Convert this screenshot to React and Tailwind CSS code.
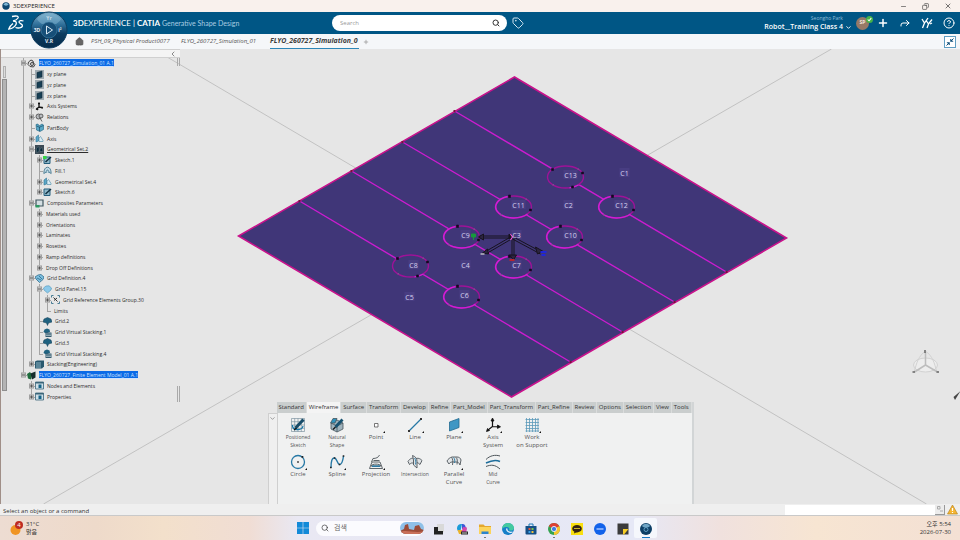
import {
  ChevronDown,
  ChevronLeft,
  CircleHelp,
  Copy,
  Forward,
  House,
  Minus,
  Plus,
  Search,
  Tag,
  X,
} from "lucide-react";

const treeRows = [
  { depth: 0, box: "-", icon: "part", label: "FLYO_260727_Simulation_01 A.1", selected: true },
  { depth: 1, icon: "plane", label: "xy plane" },
  { depth: 1, icon: "plane", label: "yz plane" },
  { depth: 1, icon: "plane", label: "zx plane" },
  { depth: 1, box: "+", icon: "axis", label: "Axis Systems" },
  { depth: 1, box: "+", icon: "relations", label: "Relations" },
  { depth: 1, icon: "body", label: "PartBody" },
  { depth: 1, box: "+", icon: "geoset", label: "Axis" },
  { depth: 1, box: "-", icon: "geosetActive", label: "Geometrical Set.2", underline: true },
  { depth: 2, box: "+", icon: "sketchGreen", label: "Sketch.1" },
  { depth: 2, icon: "fill", label: "Fill.1" },
  { depth: 2, box: "+", icon: "geoset", label: "Geometrical Set.4" },
  { depth: 2, box: "+", icon: "sketch", label: "Sketch.6" },
  { depth: 1, box: "-", icon: "composite", label: "Composites Parameters" },
  { depth: 2, box: "+", label: "Materials used" },
  { depth: 2, box: "+", label: "Orientations" },
  { depth: 2, box: "+", label: "Laminates" },
  { depth: 2, box: "+", label: "Rosettes" },
  { depth: 2, box: "+", label: "Ramp definitions" },
  { depth: 2, box: "+", label: "Drop Off Definitions" },
  { depth: 1, box: "-", icon: "gridDef", label: "Grid Definition.4" },
  { depth: 2, box: "-", icon: "gridPanel", label: "Grid Panel.15" },
  { depth: 3, box: "+", icon: "group", label: "Grid Reference Elements Group.30" },
  { depth: 3, label: "Limits" },
  { depth: 2, icon: "grid", label: "Grid.2" },
  { depth: 2, icon: "stacking", label: "Grid Virtual Stacking.1" },
  { depth: 2, icon: "grid", label: "Grid.3" },
  { depth: 2, icon: "stacking", label: "Grid Virtual Stacking.4" },
  { depth: 1, box: "+", icon: "engineering", label: "Stacking(Engineering)" },
  { depth: 0, box: "-", icon: "fem", label: "FLYO_260727_Finite Element Model_01 A.1", selected: true },
  { depth: 1, box: "+", icon: "nodes", label: "Nodes and Elements" },
  { depth: 1, box: "+", icon: "nodes", label: "Properties" },
];

const sections = [
  "Standard", "Wireframe", "Surface", "Transform", "Develop", "Refine", "Part_Model",
  "Part_Transform", "Part_Refine", "Review", "Options", "Selection", "View", "Tools",
];

const tools = [
  { icon: "sketch", lines: ["Positioned", "Sketch"], small: true },
  { icon: "natural", lines: ["Natural", "Shape"], small: true },
  { icon: "point", lines: ["Point"], more: true },
  { icon: "line", lines: ["Line"], more: true },
  { icon: "plane", lines: ["Plane"], more: true },
  { icon: "axis", lines: ["Axis", "System"], more: true },
  { icon: "support", lines: ["Work", "on Support"], more: true },
  { icon: "circle", lines: ["Circle"], more: true },
  { icon: "spline", lines: ["Spline"], more: true },
  { icon: "projection", lines: ["Projection"], more: true },
  { icon: "intersection", lines: ["Intersection"], small: true },
  { icon: "parallel", lines: ["Parallel", "Curve"], more: true },
  { icon: "mid", lines: ["Mid", "Curve"], small: true },
];

// ply drop holes and the cells between them
const holes = [
  { x: 565, y: 177, dark: true },
  { x: 616, y: 207 },
  { x: 513, y: 207 },
  { x: 564, y: 237 },
  { x: 461, y: 237 },
  { x: 513, y: 267 },
  { x: 410, y: 266, dark: true },
  { x: 461, y: 297 },
];

const cells = [
  ["C1", 624, 173], ["C2", 568, 205], ["C3", 516, 235], ["C4", 465, 265], ["C5", 409, 297],
  ["C6", 464, 295], ["C7", 516, 265], ["C8", 413, 265], ["C9", 465, 235], ["C10", 570, 235],
  ["C11", 518, 205], ["C12", 621, 205], ["C13", 570, 175],
];

const treeIcons = {
  part: (
    <g fill="#ddd" stroke="#444">
      <path d="M1.5 3 4 1l2 1 .5 2L8 5.500 6.500 8 3 7.500 1 5.500z" />
      <circle cx="5" cy="5" r="1.500" fill="none" />
    </g>
  ),
  plane: (
    <g>
      <path d="M0 0h9v9H0z" fill="#9fabb2" />
      <path d="M2 2.500 7 1v6L2 8z" fill="#173f55" stroke="#0d2734" strokeWidth=".5" />
    </g>
  ),
  axis: (
    <path d="M4 .5V5L1 7.500M4 5l4 .8M3 1.500h2M1.500 6l1.500 2M7 4.800v2" fill="none" stroke="#111" strokeWidth="1.300" />
  ),
  relations: (
    <g fill="#b9bcc0" stroke="#444" strokeWidth=".8">
      <circle cx="3.500" cy="3.500" r="2.500" />
      <circle cx="6" cy="3" r="2" />
      <path d="m5 5 2 3.500" />
    </g>
  ),
  body: (
    <g stroke="#1c6280" strokeWidth=".6">
      <path d="M1 1.500 3 1l1 2 3-2 1.500 1v4.500L5 8.500 1.500 7z" fill="#58a7c6" />
      <path d="M4.500 4v4.300M1.500 3l3 1.200L8.300 2.500" fill="none" stroke="#0f3d55" />
    </g>
  ),
  geoset: (
    <g>
      <path d="M1 3 3.500 1v6L1 8z" fill="#5aa7c9" stroke="#2d7595" strokeWidth=".6" />
      <path d="M4 7.500V4l1.500-1.500L8 6.500v1z" fill="#dcecf4" stroke="#4186a4" strokeWidth=".6" />
    </g>
  ),
  geosetActive: (
    <g>
      <path d="M0 0h9v9H0z" fill="#3c4a54" />
      <path d="M1.500 3 4 1.500v5L1.500 7.500zM5 4l2-1.500 1 4H5z" fill="#0d2b3a" stroke="#6c8793" strokeWidth=".4" />
    </g>
  ),
  sketch: (
    <g fill="none" stroke="#245e7c">
      <path d="M1 1h6v6.500H1z" fill="#8fb8ca" />
      <path d="m2.500 6 5.500-5" stroke="#102f40" strokeWidth="1.500" />
    </g>
  ),
  sketchGreen: (
    <g fill="none" stroke="#245e7c">
      <path d="M1 1h6v6.500H1z" fill="#8fb8ca" />
      <path d="m2.500 6 5.500-5" stroke="#102f40" strokeWidth="1.500" />
      <path d="M0 0h3.500v3H0z" fill="#35d447" stroke="none" />
    </g>
  ),
  fill: (
    <g fill="#c4dbe5" stroke="#376d86" strokeWidth=".8">
      <path d="M.8 7.500C1 3.500 2 1.500 4.500 1.200 7 1.500 8 3.500 8.200 7.500 6 5.800 3 5.800.8 7.500z" />
      <path d="M3 7c0-4 3-4 3 0" />
    </g>
  ),
  composite: (
    <g>
      <path d="M1 1h7v6H1z" fill="#d4dee2" stroke="#3f565f" strokeWidth="1.200" />
      <path d="M.5 6h4v2.500h-4z" fill="#2c9a62" />
    </g>
  ),
  gridDef: (
    <g stroke="#1f5e80" strokeWidth=".7">
      <path d="M4.500 8.500 1 5 0 3l3-2 3-.5 3 2.500-1 2.500z" fill="#7fc0e0" />
      <path d="m2 4 4 2M4 2l3 3" fill="none" />
    </g>
  ),
  gridPanel: (
    <path d="M4.500 8 1 5 .5 3 3 1l3-.2L8.500 3 8 5z" fill="#8cc9ea" stroke="#4c95bb" strokeWidth=".6" />
  ),
  group: (
    <g fill="none" stroke="#356f8a" strokeWidth=".9">
      <path d="M.5 2.500v-2h2M6.500.5h2v2M8.500 6.500v2h-2M2.500 8.500h-2v-2" />
      <path d="m2.500 2.500 4 4M3 5.500 6 3" stroke="#222" />
    </g>
  ),
  grid: (
    <path d="M4.500 8.500 3.500 6 0 5l1-3 3.500-1.500L8 2l1 3-3.500 1z" fill="#1f6280" stroke="#123f55" strokeWidth=".5" />
  ),
  stacking: (
    <g>
      <path d="M3 5.500.5 4 1.500 1.500 4 .5l2.500 1L7 4z" fill="#1f6280" />
      <path d="M2.500 4.500h6V9h-6z" fill="#365c70" />
      <path d="M3 6h5M3 7.500h5" stroke="#cfdfe6" strokeWidth=".6" />
    </g>
  ),
  engineering: (
    <g>
      <path d="M0 1.500 2 .5h7v6L7 8.500H0z" fill="#28596f" />
      <path d="M1 3h5M1 5h5M1 7h5" stroke="#a8cbd9" strokeWidth=".8" />
    </g>
  ),
  fem: (
    <g>
      <path d="M0 3 3 1l2 3-1 4.500L1 7.500z" fill="#1e6b3c" />
      <path d="M3.500 2.500 8.500.5v6L5 8.500z" fill="#152d2b" />
    </g>
  ),
  nodes: (
    <g>
      <path d="M.5 1h8v7h-8z" fill="#cfe0e8" stroke="#3a6578" strokeWidth=".8" />
      <path d="M.5 1h8v1.500h-8z" fill="#3a6578" />
      <path d="M3.500 3.500h3v3.500h-3z" fill="#176488" />
    </g>
  ),
};

const toolIcons = {
  sketch: (
    <g fill="none" stroke="#6d8796" strokeWidth=".6">
      <path d="M1.500 1.500h13v13h-13zM1.500 4.700h13M1.500 8h13M1.500 11.300h13M4.700 1.500v13M8 1.500v13M11.300 1.500v13" />
      <path d="M2.500 8c-1 6 10 6 10.500 1" stroke="#1677a8" strokeWidth="1.300" />
      <path d="m5.500 11 8-8.500" stroke="#164b68" strokeWidth="3" />
      <path d="m4 13 2.500-2" stroke="#111" strokeWidth="1.200" />
    </g>
  ),
  natural: (
    <g stroke="#47555d" strokeWidth=".8">
      <path d="M2 6 8 3l6 3v6l-6 3-6-3z" fill="#9fb3bd" />
      <path d="m2 6 6 3 6-3M8 9v6" fill="none" />
      <path d="M1.500 6 4 1.500h4L6 6z" fill="#2f93bd" />
      <path d="m6.500 10 7-7.500" stroke="#16516f" strokeWidth="2.800" />
      <path d="m4 12.500 2.500-2.500" stroke="#111" strokeWidth="1.300" />
    </g>
  ),
  point: <path d="M6.500 6.500h3.500v3.500H6.500z" fill="#fff" stroke="#555" strokeWidth=".8" />,
  line: (
    <g>
      <path d="m2 14 12-12" stroke="#2678a5" strokeWidth="1.200" />
      <path d="M1 13h2v2H1zM13 1h2v2h-2z" fill="#333" />
    </g>
  ),
  plane: <path d="M3.500 5 13 1.500v9L3.500 14z" fill="#3f97c4" stroke="#226b91" strokeWidth=".8" />,
  axis: (
    <g fill="#111" stroke="#111" strokeWidth=".8">
      <path d="M7.500 3v6.500L3 13M7.500 9.500l6 .3" fill="none" strokeWidth="1.200" />
      <path d="M7.500 1 9 4H6zM15.500 9.800l-3 1.600V8zM1.500 14.500l1-3 2 2z" />
    </g>
  ),
  support: (
    <path d="M2.500 1v14M5.500 1v14M8.500 1v14M11.500 1v14M14 1v14M1.500 2.500h13.500M1.500 5.500h13.500M1.500 8.500h13.500M1.500 11.500h13.500M1.500 14h13.500" stroke="#5c9aba" strokeWidth=".8" />
  ),
  circle: (
    <g>
      <circle cx="8" cy="8" r="6.500" fill="none" stroke="#2678a5" strokeWidth="1.300" />
      <path d="M7.200 7.200h1.600v1.600H7.200zM11.500 2h1.800v1.800h-1.800z" fill="#222" />
    </g>
  ),
  spline: (
    <g fill="none">
      <path d="M2 14C2 7 3 3.500 5.500 4c3 .5 2.500 6.500 5 6.500S14 6 14.500 2" stroke="#2678a5" strokeWidth="1.400" />
      <path d="M1 13.500h1.600M4.800 4h1.600M9.700 10.500h1.600M13.700 2h1.600" stroke="#222" strokeWidth="1.600" />
    </g>
  ),
  projection: (
    <g fill="none" stroke="#4d555a" strokeWidth=".9">
      <path d="M5 4.500c3 0 5.500-1 6.500-3.500M5 4.500 3.500 8M1.500 14.500 4 8h8l2.500 6.500z" />
      <path d="M5.500 6.500h6M3 12c1-2.500 9-2.500 10 0z" />
      <path d="M4 12.200h8" stroke="#2678a5" strokeWidth="1.500" />
    </g>
  ),
  intersection: (
    <g fill="#dfe2e4" stroke="#4d555a" strokeWidth=".9">
      <path d="M1 7.500C3 4 6 3.500 8 5l-1.500 4.500C5 8.500 4 9 2.500 10.500z" />
      <path d="M8 5c3-1.500 5-.5 7 1.500l-2 4C11 8.500 9.500 8 7 9z" />
      <path d="M5.500 1.500c3 1 4.500 3 4.500 6v6.500L6.500 11V6z" />
      <path d="M7.500 4c1.500 2 1.500 4 1 6.500" fill="none" stroke="#2678a5" />
    </g>
  ),
  parallel: (
    <g fill="#e3e6e8" stroke="#4d555a" strokeWidth=".9">
      <path d="M1 7c1-2 3-3.500 5-4h5c2 0 3.500 1 4 3l-1 5c-.5-2-2-3-4-3H6C4.500 8 3.500 9 3 10z" />
      <path d="M5.500 3.500C7 5 7 7 6.500 11M10 3.500c1.500 1.500 1.500 3 1 7" fill="none" />
      <path d="M7.500 3.500C9 5 9 7 8.500 9" fill="none" stroke="#2678a5" />
    </g>
  ),
  mid: (
    <g fill="none" stroke="#4d555a" strokeWidth="1">
      <path d="M1 5.500C5 1.500 10 .5 15 2" />
      <path d="M1 9c5-2.500 9-4 14-1.500" stroke="#1d6d9b" strokeWidth="1.500" />
      <path d="M1 12.500c5-2 9-2 14 2.500" />
    </g>
  ),
};

// true when another sibling at this level follows further down
function continues(index, level) {
  for (let i = index + 1; i < treeRows.length; i++) {
    if (treeRows[i].depth === level) return true;
    if (treeRows[i].depth < level) return false;
  }
  return false;
}

function TreeRow({ row, index }) {
  const levels = Array.from({ length: row.depth + 1 }, (_, level) => level);

  return (
    <li className="flex items-center">
      {levels.map((level) => {
        const own = level === row.depth;
        const more = continues(index, level);

        return (
          <span key={level} className="relative h-full w-2 shrink-0">
            {(own || more) && (
              <span className={`absolute left-1 top-0 w-px bg-[#a4a4a4] ${more ? "h-full" : "h-1/2"}`} />
            )}
            {own && <span className="absolute left-1 top-1/2 h-px w-1 bg-[#a4a4a4]" />}
            {own && row.box && (
              <button
                aria-label={row.box === "+" ? "Expand" : "Collapse"}
                className="absolute left-0.5 top-1/2 flex size-[5px] -translate-y-1/2 items-center justify-center border border-[#a0a0a0] bg-[#d5d5d5]"
              >
                <span className="h-px w-[3px] bg-[#555]" />
                {row.box === "+" && <span className="absolute h-[3px] w-px bg-[#555]" />}
              </button>
            )}
          </span>
        );
      })}
      {row.icon && (
        <svg viewBox="0 0 9 9" className="size-[9px] shrink-0">
          {treeIcons[row.icon]}
        </svg>
      )}
      <span
        className={`ml-[3px] whitespace-nowrap leading-[8px] ${
          row.selected
            ? "bg-[#0b6ae6] text-[#cfe3ff] underline"
            : row.underline
              ? "text-[#2c2c2c] underline"
              : "text-[#2c2c2c]"
        }`}
      >
        {row.label}
      </span>
    </li>
  );
}

function SpecTree() {
  return (
    <aside className="z-10 flex w-[179px] flex-col self-start justify-self-start">
      <div className="flex h-[9px] items-center justify-end border-y border-[#d0d0d0] bg-[#f4f4f4] pr-[3px]">
        <ChevronLeft className="size-2 text-[#555]" />
      </div>
      <div className="flex">
        <div className="flex w-[18px] flex-col gap-px pl-px pt-2">
          <div className="ml-px h-3 w-[3px] border border-[#b0b0b0] bg-[#ddd]" />
          <div className="h-[312px] w-[5px] border border-[#8e8e8e] bg-[#b4b4b4]" />
        </div>
        <ul className="grid h-[344px] flex-1 auto-rows-fr font-['Open_Sans',sans-serif] text-[5px] font-medium">
          {treeRows.map((row, index) => (
            <TreeRow key={index} row={row} index={index} />
          ))}
        </ul>
        <div className="flex w-[3px] flex-col justify-between">
          <div className="h-2 border-x border-[#a9a9a9]" />
          <div className="h-4 border-x border-[#a9a9a9]" />
        </div>
      </div>
    </aside>
  );
}

function Hole({ x, y, dark }) {
  return (
    <g transform={`translate(${x} ${y})`}>
      <ellipse cx="0" cy="0" rx="18" ry="11" fill="#403678" stroke="#9e1298" strokeWidth="1.400" />
      {!dark && (
        <path d="M-6-10.400A18 11 0 1 0 14 7" fill="none" stroke="#cf1fd4" strokeWidth="1.500" />
      )}
      {dark && <path d="M4 10.800A18 11 0 0 0 13 8" fill="none" stroke="#cf1fd4" strokeWidth="1.300" />}
      <path
        d={dark ? "M-14-8.500h2v2h-2zM16-5h2v2h-2zM6 9h2v2H6z" : "M-5-12h2v2.500h-2zM16 2h2v2h-2z"}
        fill="#150822"
        stroke="#150822"
        strokeWidth=".6"
      />
      <path d="M12-8.500h1.500v1.500H12zM-13 7h1.500v1.500H-13z" fill="#7d4f8f" />
    </g>
  );
}

function Viewport() {
  return (
    <svg viewBox="0 49 960 455" preserveAspectRatio="xMidYMid slice" className="size-full min-h-0">
      <path d="M831 49 43 504M153 49 926 504" stroke="#c2c2c2" strokeWidth="1" />

      {/* LAMINATE */}
      <path d="m514 77 272 161-275 159L238 236z" fill="#403678" stroke="#c9128c" strokeWidth="1.600" />
      <path
        d="m454 111 272 161M402 142l272 160M351 171l271 161M299 201l271 161"
        stroke="#cb1ccf"
        strokeWidth="1.400"
      />
      <path
        d="M453 110h2v2h-2zM401 141h2v2h-2zM350 170h2v2h-2zM298 200h2v2h-2zM725 271h2v2h-2zM673 301h2v2h-2zM621 331h2v2h-2zM569 361h2v2h-2z"
        fill="#7a1238"
      />
      {holes.map((hole) => (
        <Hole key={`${hole.x}-${hole.y}`} {...hole} />
      ))}

      {cells.map(([name, x, y]) => (
        <rect
          key={name}
          x={x - (name.length > 2 ? 7 : 5)}
          y={y - 5}
          width={name.length > 2 ? 14 : 10}
          height="9"
          fill="#483d82"
        />
      ))}

      {/* ROBOT */}
      <g stroke="#17131f" fill="none">
        <path d="M511 236h-32M511 238h-32" />
        <path d="m510 237-24 14M511 239l-24 14M513 237l28 15M512 239l28 15" />
        <path d="M511.500 238v20M513.500 238v20" />
        <path d="m483 234-5 3 5 3zM509 255h7l-3 5zM487 249l-5 4 6 1zM535 247l7 4-5 3z" fill="#2c2440" />
      </g>
      <path d="M508 234h4v5h-4z" fill="#17131f" />
      <path d="m510 234 2 3-2 3" fill="none" stroke="#ee5ce0" strokeWidth="1.200" />
      <path d="M471 234h4v3h-4zM473 237v3" fill="#17993c" stroke="#17993c" />
      <path d="M480 254h4" stroke="#bdbdc6" strokeWidth="1.500" />
      <path d="M540 252h6M541 255h4" stroke="#2026d8" strokeWidth="2" />
      <path d="M509 260h5" stroke="#b8242f" strokeWidth="2" />

      <g fill="#d6d1ee" fontSize="7" fontFamily="Open Sans, sans-serif" textAnchor="middle">
        {cells.map(([name, x, y]) => (
          <text key={name} x={x} y={y + 2.5}>{name}</text>
        ))}
      </g>

      {/* COMPASS */}
      <g fill="none" stroke="#d2d2d2">
        <ellipse cx="925" cy="365" rx="12" ry="7" fill="#ededed" />
        <path d="M925 351c-7 5-9 12-11 20M925 351c7 5 9 12 11 20" />
        <path d="m914 372 11-7 12 7M925 365v-13" stroke="#bdbdbd" strokeWidth="1.500" />
        <path d="M924.500 350v3M912 372h2.500M936 372h2.500" stroke="#666" strokeWidth="1.500" />
      </g>
      <path d="m960 391-7 6 1.500 3z" fill="#444" />
    </svg>
  );
}

function Toolbox() {
  return (
    <section className="z-10 flex w-[426px] max-w-full items-end self-end justify-self-center">
      <div className="flex h-[91px] w-[9px] justify-center border-l border-t border-[#cfcfcf] bg-[#efefef]">
        <ChevronDown className="mt-px size-[7px] text-[#666]" />
      </div>
      <div className="flex-1 border-r-2 border-[#d2d5d6]">
        <nav className="flex h-[11px] font-['Open_Sans',sans-serif] text-[6px] text-[#333]">
          {sections.map((name) => (
            <button
              key={name}
              className={`flex-auto whitespace-nowrap border-r border-[#dadcdc] leading-[11px] ${
                name === "Wireframe" ? "bg-[#f4f4f4]" : "bg-[#cacece]"
              }`}
            >
              {name}
            </button>
          ))}
        </nav>
        <div className="grid h-[91px] grid-cols-[repeat(7,39px)] grid-rows-[37px_37px] border-l border-[#cfcfcf] bg-[#f0f1f1] pl-px pt-1">
          {tools.map((tool) => (
            <button
              key={tool.lines[0]}
              className={`flex flex-col items-center font-['Open_Sans',sans-serif] leading-[8px] text-[#555] ${
                tool.small ? "text-[5px]" : "text-[6px]"
              }`}
            >
              <span className="relative flex">
                <svg viewBox="0 0 16 16" className="size-4">
                  {toolIcons[tool.icon]}
                </svg>
                {tool.more && (
                  <svg viewBox="0 0 2 2" className="absolute -right-px bottom-0 size-0.5">
                    <path d="M2 0v2H0z" fill="#111" />
                  </svg>
                )}
              </span>
              {tool.lines.map((line) => (
                <span key={line} className="whitespace-nowrap">{line}</span>
              ))}
            </button>
          ))}
        </div>
      </div>
    </section>
  );
}

function CompassButton() {
  return (
    <svg viewBox="0 0 38 38" className="size-[38px]">
      <defs>
        <linearGradient id="dial" x1="0" y1="0" x2="0" y2="1">
          <stop offset="0" stopColor="#7fb0cc" />
          <stop offset=".35" stopColor="#2f6f99" />
          <stop offset=".6" stopColor="#0c3c60" />
          <stop offset="1" stopColor="#062c4b" />
        </linearGradient>
      </defs>
      <circle cx="19" cy="19" r="18" fill="url(#dial)" stroke="#0d3d60" />
      <path d="M7 8C12 1 26 1 31 8c-3 5-6 6-12 6S10 13 7 8z" fill="#84b5d1" opacity=".5" />
      <circle cx="19" cy="19" r="8" fill="#174f78" stroke="#4583a8" strokeWidth=".6" />
      <path d="m16.500 15 6 4-6 4z" fill="none" stroke="#dbeaf4" />
      <g fill="#e6f0f6" fontSize="5" fontWeight="700" fontFamily="Open Sans, sans-serif" textAnchor="middle">
        <text x="19" y="9" opacity=".7">Yr</text>
        <text x="7" y="21">3D</text>
        <text x="30" y="21">i²</text>
        <text x="19" y="32">V.R</text>
      </g>
    </svg>
  );
}

function Header() {
  return (
    <header className="relative z-20 font-['Open_Sans',sans-serif]">
      {/* WINDOW TITLE */}
      <div className="flex h-3 items-center bg-[#f9f1ed] pl-[2px] pr-2">
        <svg viewBox="0 0 8 8" className="size-2">
          <circle cx="4" cy="4" r="3.700" fill="#0d4670" />
          <path d="M1.500 2.500c1-2 4-2 5 0-1 1.500-4 1.500-5 0z" fill="#7db4d3" />
        </svg>
        <span className="ml-[3px] flex-1 text-[6px] leading-[12px] text-[#222]">3DEXPERIENCE</span>
        <div className="flex gap-[15px] text-[#333]">
          <button aria-label="Minimize"><Minus className="size-[7px]" /></button>
          <button aria-label="Restore"><Copy className="size-[7px] -scale-x-100" /></button>
          <button aria-label="Close"><X className="size-2" /></button>
        </div>
      </div>

      {/* APP BAR */}
      <div className="flex h-[22px] items-center bg-[#005685] pl-2 pr-[5px] text-white">
        <svg viewBox="0 0 16 16" className="size-4" fill="none" stroke="#fff" strokeWidth="1.300">
          <path d="M4 1.500c4-1 7-.5 6 1.500C9 4.500 7 5.500 5 6c2.500 0 4 1 3 3.500S3 14 .8 14C1.500 11.500 3 10 5 8.500" />
          <path d="M15.500 6c-2-.8-4.500-.5-4.500 1s4 2 3.500 4-4.500 2.500-7 1.500" />
        </svg>
        <div className="ml-[49px] flex w-[259px] items-baseline whitespace-nowrap font-['Lato',sans-serif] leading-[12px]">
          <span className="text-[8px]"><b>3D</b>EXPERIENCE</span>
          <span className="mx-[2px] text-[8px]">|</span>
          <b className="text-[8px]">CATIA</b>
          <span className="ml-[2px] text-[7px] text-[#a9cde2]">Generative Shape Design</span>
        </div>
        <label className="flex h-4 w-[175px] items-center rounded-full bg-white pl-2 pr-[7px]">
          <input
            aria-label="Search"
            placeholder="Search"
            className="min-w-0 flex-1 text-[6px] text-[#444] outline-none placeholder:text-[#999]"
          />
          <Search className="size-2 text-[#333]" strokeWidth={3} />
        </label>
        <Tag className="ml-[5px] size-3 text-[#d5e7f1]" strokeWidth={2} />

        <div className="ml-auto flex flex-col items-end">
          <span className="text-[5px] leading-[7px] text-[#8fbcd6]">Seongho Park</span>
          <span className="text-[7px] font-semibold leading-[10px]">Robot__Training Class 4</span>
        </div>
        <ChevronDown className="ml-[2px] mt-2 size-[7px]" strokeWidth={3} />
        <span className="relative ml-1 flex size-[13px] items-center justify-center rounded-full bg-[#967967] text-[5px] font-bold text-[#efe5de]">
          SP
          <svg viewBox="0 0 8 8" className="absolute -right-1 -top-px size-[7px]">
            <circle cx="4" cy="4" r="4" fill="#45b348" />
            <path d="m2 4 1.500 1.500L6 2.500" fill="none" stroke="#fff" strokeWidth="1.200" />
          </svg>
        </span>
        <div className="ml-2 flex items-center gap-[10px]">
          <button aria-label="Add"><Plus className="size-3" strokeWidth={3} /></button>
          <button aria-label="Share"><Forward className="size-3" strokeWidth={2} /></button>
          <button aria-label="Communities">
            <svg viewBox="0 0 12 12" className="size-3" fill="none" stroke="#fff" strokeWidth="1.300">
              <path d="m1 2 2.500 4L7 1M3.500 6 1.500 11M5.500 4l2 3L11 2.500M7.500 7 6 11M9 7l2-1" />
            </svg>
          </button>
          <button aria-label="Help"><CircleHelp className="size-3" /></button>
        </div>
      </div>

      {/* DOCUMENT TABS */}
      <nav className="flex h-[15px] items-center bg-[#f5f7f9] pl-[75px] pr-1 text-[6px] italic text-[#555]">
        <House className="size-[9px] fill-[#666]" />
        <a href="#product" className="ml-[7px] w-[86px] whitespace-nowrap">PSH_09_Physical Product0077</a>
        <a href="#sim1" className="ml-1 w-[83px] whitespace-nowrap">FLYO_260727_Simulation_01</a>
        <a
          href="#sim2"
          className="ml-[6px] flex h-full w-[89px] items-center whitespace-nowrap border-b border-[#2c86b8] text-[7px] font-bold text-[#3c3c3c]"
        >
          FLYO_260727_Simulation_0
        </a>
        <button aria-label="New tab" className="ml-1"><Plus className="size-[6px] text-[#999]" strokeWidth={3} /></button>
        <button aria-label="Exit full screen" className="ml-auto flex size-3 items-center justify-center border border-[#5f9dc2] bg-white">
          <svg viewBox="0 0 10 10" className="size-[10px]" stroke="#0b4d78" fill="#0b4d78">
            <path d="M8.500 1.500 6 4M1.500 8.500 4 6" />
            <path d="M5.500 2v2.500H8zM4.500 8V5.500H2z" strokeWidth=".5" />
          </svg>
        </button>
      </nav>

      <div className="absolute left-[30px] top-[11px]">
        <CompassButton />
      </div>
    </header>
  );
}

function StatusBar() {
  return (
    <div className="flex h-3 items-center border-b border-[#c9c9c9] bg-[#efefef] pl-[3px] pr-[2px] font-['Open_Sans',sans-serif] text-[6px] text-[#333]">
      <span className="flex-1 pt-[3px] leading-[8px]">Select an object or a command</span>
      <label className="flex h-[10px] w-[150px] bg-white">
        <input aria-label="Command" className="w-full px-1 outline-none" />
      </label>
      <button aria-label="Browse" className="mr-[2px] flex size-[10px] items-center justify-center border-b border-r border-[#999] bg-[#ececec]">
        <svg viewBox="0 0 6 6" className="size-[6px]" fill="none" stroke="#aaa">
          <path d="M.5.500h2.500v2.500H.5zM3 5h3" />
        </svg>
      </button>
      <svg viewBox="0 0 11 11" className="size-[11px]">
        <path d="M5.500 1 10.500 10H.5z" fill="#f6b531" stroke="#b98724" strokeWidth=".7" />
        <path d="M5.500 4v3M5.500 8v1" stroke="#fff" strokeWidth="1.200" />
      </svg>
    </div>
  );
}

const taskApps = [
  {
    name: "Task view",
    art: (
      <g>
        <path d="M4 1h7v8H4z" fill="#d9d9d9" />
        <path d="M1 4h4v4h5v3.500H1z" fill="#222" />
      </g>
    ),
  },
  {
    name: "Copilot",
    art: (
      <g>
        <path d="M1 6C1 2 3 1 6 1L4.500 8H2z" fill="#1a9bd8" />
        <path d="M6 1c3 0 3 1 4 4L6 6z" fill="#3d57d8" />
        <path d="M1.500 7h5L5 11H3z" fill="#e9b32c" />
        <path d="m7 4 4 .5c0 3-1 6-3 6.500H5z" fill="#d549a8" />
        <path d="M5 8.500h7v3H5z" fill="#2a2a2a" />
        <path d="M6 10h5" stroke="#eee" strokeWidth=".8" />
      </g>
    ),
  },
  {
    name: "File Explorer",
    running: true,
    art: (
      <g>
        <path d="M0 1.500h4.500L6 3h6v8H0z" fill="#e4a72f" />
        <path d="M0 4h12v7H0z" fill="#fcd45c" />
        <path d="M2.500 8.500h7V11h-7z" fill="#2b83ce" />
      </g>
    ),
  },
  {
    name: "Edge",
    art: (
      <g>
        <circle cx="6" cy="6" r="6" fill="#1780c8" />
        <path d="M0 6C.5 2 3 0 6 0c4 0 6 3 6 5 0 3-4 3-5 2 1-1 0-3-2-3S1 4.500 0 6z" fill="#43c9a0" />
        <path d="M5 5.500C4 8 7 10 10.500 9" fill="none" stroke="#e8f4fb" strokeWidth="1.300" />
      </g>
    ),
  },
  {
    name: "Store",
    art: (
      <g>
        <path d="M4 3V1h4v2" fill="none" stroke="#1c7ab8" />
        <path d="M.5 3h11v7.500a1 1 0 0 1-1 1h-9a1 1 0 0 1-1-1z" fill="#154f86" />
        <path d="M3.500 5h2v2h-2z" fill="#e8553a" />
        <path d="M6.500 5h2v2h-2z" fill="#7fc24a" />
        <path d="M3.500 8h2v2h-2z" fill="#3aa0e8" />
        <path d="M6.500 8h2v2h-2z" fill="#f2c33c" />
      </g>
    ),
  },
  {
    name: "Chrome",
    running: true,
    art: (
      <g>
        <circle cx="6" cy="6" r="6" fill="#35a250" />
        <path d="M6 6 .8 3A6 6 0 0 1 11.200 3z" fill="#df4134" />
        <path d="M6 6 11.200 3A6 6 0 0 1 6 12z" fill="#f7c52f" />
        <path d="M.8 3h10.400L6 6z" fill="#df4134" />
        <circle cx="6" cy="6" r="2.600" fill="#3f7be0" stroke="#fff" strokeWidth=".8" />
      </g>
    ),
  },
  {
    name: "KakaoTalk",
    art: (
      <g>
        <path d="M0 0h12v12H0z" fill="#f9df10" />
        <ellipse cx="6" cy="5.700" rx="4.800" ry="3.700" fill="#332312" />
        <path d="m3.500 8-.5 2.500L6 9z" fill="#332312" />
        <path d="M3 5.500h6" stroke="#c9b224" />
      </g>
    ),
  },
  {
    name: "Zoom",
    art: (
      <g>
        <circle cx="6" cy="6" r="6" fill="#1262ea" />
        <path d="M2.500 6h7" stroke="#9fc0ff" strokeWidth="1.500" />
      </g>
    ),
  },
  {
    name: "Sticky Notes",
    art: (
      <g>
        <path d="M.5.500h11v11H.5z" fill="#3b3b3b" />
        <path d="M6 6h5.500L7 11.500H6z" fill="#f6cd25" />
      </g>
    ),
  },
  {
    name: "3DEXPERIENCE",
    active: true,
    art: (
      <g>
        <circle cx="6" cy="6" r="6" fill="#0d3f66" />
        <path d="M2 3c2-3 6-3 8 0-2 2-6 2-8 0z" fill="#6ea4c4" />
        <circle cx="6" cy="6.500" r="2" fill="none" stroke="#5f9cc0" />
      </g>
    ),
  },
];

function Taskbar() {
  return (
    <footer className="grid h-6 grid-cols-[1fr_auto_1fr] items-center bg-[linear-gradient(90deg,#eddcd2_0%,#eedaca_10%,#f3e0cb_17%,#f0ddd4_26%,#e9e8f3_31%,#e6e8f6_66%,#f0e1de_75%,#f7e5d2_85%,#f3e0d4_100%)] font-['Open_Sans','Noto_Sans_CJK_KR',sans-serif] text-[6px] text-[#333]">
      <div className="flex items-center gap-[3px] pl-[10px]">
        <svg viewBox="0 0 13 15" className="h-[15px] w-[13px]">
          <circle cx="5.500" cy="9" r="5" fill="#f09423" />
          <circle cx="9" cy="4" r="4" fill="#be2b21" />
          <text x="9" y="6.200" fill="#fff" fontSize="6" textAnchor="middle">4</text>
        </svg>
        <div className="leading-[8px]">
          <p>31°C</p>
          <p>맑음</p>
        </div>
      </div>

      <div className="flex items-center pr-[6px]">
        <button aria-label="Start" className="mr-[7px]">
          <svg viewBox="0 0 12 12" className="size-3" fill="#138ad8">
            <path d="M0 0h5.700v5.700H0zM6.300 0H12v5.700H6.300zM0 6.300h5.700V12H0zM6.300 6.300H12V12H6.300z" />
          </svg>
        </button>
        <label className="mr-[3px] flex h-[15px] w-[108px] items-center rounded-full bg-[#fbfbfe] pl-[5px]">
          <Search className="size-2 text-[#333]" />
          <input
            aria-label="검색"
            placeholder="검색"
            className="ml-[5px] min-w-0 flex-1 text-[7px] outline-none placeholder:text-[#666]"
          />
          <svg viewBox="0 0 24 12" className="h-3 w-6">
            <clipPath id="pill"><rect width="24" height="12" rx="6" /></clipPath>
            <g clipPath="url(#pill)">
              <path d="M0 0h24v12H0z" fill="#8fc0e8" />
              <path d="M0 9 4 7l1-4 3-1 1 5 5 1 1-4 4-1 2 4 3 1v5H0z" fill="#9c4c38" />
              <path d="M0 10c6-3 16 2 24-1v3H0z" fill="#c9705a" />
            </g>
          </svg>
        </label>
        {taskApps.map((app) => (
          <button
            key={app.name}
            aria-label={app.name}
            className={`flex h-5 w-[23px] flex-col items-center justify-end rounded-xs ${
              app.active ? "bg-[#f5f7fc]" : ""
            }`}
          >
            <svg viewBox="0 0 12 12" className="size-3">{app.art}</svg>
            <span
              className={`mt-[2px] h-px ${
                app.active ? "w-2 bg-[#1477c4]" : app.running ? "w-[2px] bg-[#777]" : "w-0"
              }`}
            />
          </button>
        ))}
      </div>

      <div className="pr-[9px] text-right leading-[8px]">
        <p>오후 5:54</p>
        <p>2026-07-30</p>
      </div>
    </footer>
  );
}

function App() {
  return (
    <div className="flex h-screen flex-col overflow-hidden bg-[#f3e3d8]">
      <Header />
      <main className="grid min-h-0 flex-1 grid-cols-1 grid-rows-1 overflow-hidden border-l border-[#a08f88] bg-[#e6e6e6] *:[grid-area:1/1]">
        <Viewport />
        <SpecTree />
        <Toolbox />
      </main>
      <StatusBar />
      <Taskbar />
    </div>
  );
}

export default App;
